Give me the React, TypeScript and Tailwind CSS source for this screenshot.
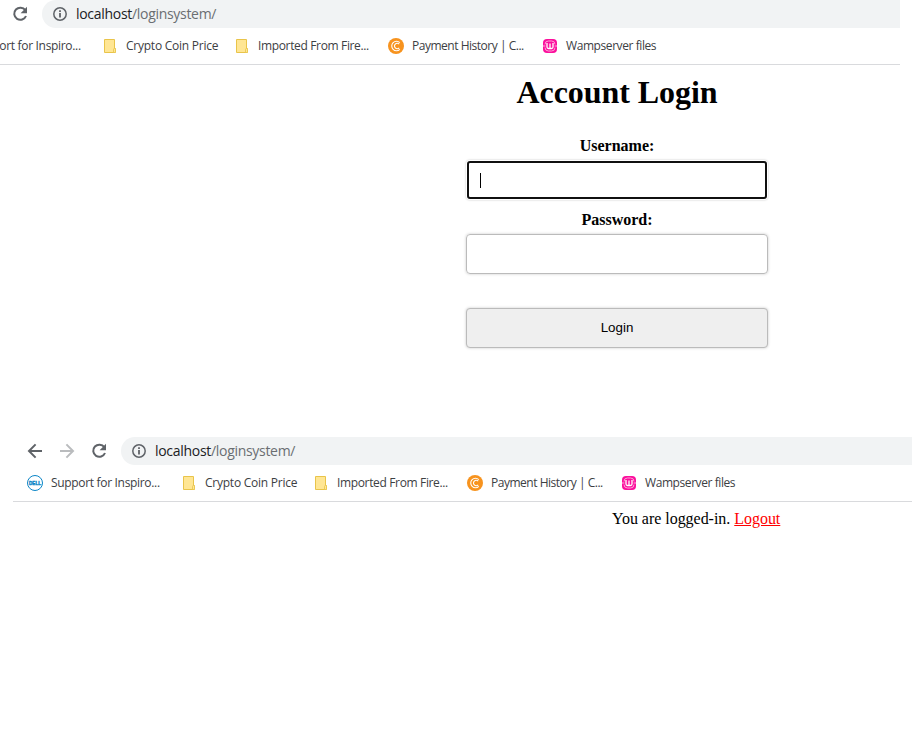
import React from "react";

const ICON = "#5f6368";

function BackIcon({ flip, color }: { flip?: boolean; color: string }) {
  return (
    <svg width="20" height="20" viewBox="0 0 20 20" fill="none" stroke={color} strokeWidth="2" className={flip ? "rotate-180" : ""}>
      <path d="M17 10H4.4M10.6 3.4L4 10l6.6 6.6" />
    </svg>
  );
}

function ReloadIcon() {
  return (
    <svg width="20" height="20" viewBox="0 0 20 20" fill="none">
      <path d="M15.3 6.2A6.1 6.1 0 1 0 16 12" stroke={ICON} strokeWidth="2" />
      <path d="M17 2.8V9.2H10.6z" fill={ICON} />
    </svg>
  );
}

function InfoIcon() {
  return (
    <svg width="14" height="14" viewBox="0 0 14 14" fill="none">
      <circle cx="7" cy="7" r="6.2" stroke={ICON} strokeWidth="1.5" />
      <path d="M6.1 6h1.8v4.5H6.1zM6.1 3.3h1.8V5H6.1z" fill={ICON} />
    </svg>
  );
}

function DellIcon() {
  return (
    <svg width="16" height="16" viewBox="0 0 16 16" fill="none">
      <circle cx="8" cy="8" r="7.5" stroke="#0a85c7" strokeWidth="1" />
      <text x="8" y="9.6" textAnchor="middle" textLength="12" lengthAdjust="spacingAndGlyphs" fontFamily="Liberation Sans" fontWeight="700" fontSize="4.6" fill="#0a85c7" stroke="#0a85c7" strokeWidth=".4">DELL</text>
    </svg>
  );
}

function FolderIcon() {
  return (
    <svg width="14" height="16" viewBox="0 0 14 16">
      <path d="M.5 1.5h10v9h1v4H.5z" fill="#ffe694" stroke="#e9c44a" />
      <path d="M9.5 14.5v-3q0-1 1-1t1 1v2q0 1-1 1z" fill="#ffe694" stroke="#e9c44a" strokeWidth=".8" />
    </svg>
  );
}

function CoinIcon() {
  return (
    <svg width="16" height="16" viewBox="0 0 16 16" fill="none">
      <circle cx="8" cy="8" r="8" fill="#f7931e" />
      <path d="M11.8 4.7A4.7 4.7 0 1 0 11.8 11.3" stroke="#fff" strokeWidth="1.1" />
      <path d="M11.2 6.2A2.7 2.7 0 1 0 11.2 9.8" stroke="#fff" strokeWidth="1.1" />
    </svg>
  );
}

function WampIcon() {
  return (
    <svg width="14" height="14" viewBox="0 0 14 14" fill="none">
      <rect width="14" height="14" rx="4" fill="#fb0f9c" />
      <path d="M2 5.4Q2 2 5.4 2h3.2Q12 2 12 5.4M2 8.6Q2 12 5.4 12h3.2Q12 12 12 8.6" stroke="#ff9fd6" strokeWidth="1" />
      <path d="M0 7h2.4M11.6 7H14" stroke="#ffb5df" strokeWidth="1" />
      <path d="M4 4v4q0 1.5 1.5 1.5H7V4.4M7 9.5h1.5Q10 9.5 10 8V4" stroke="#fff" strokeWidth="1.3" />
    </svg>
  );
}

function BrowserBar() {
  return (
    <div className="h-[65px] border-b border-[#d9dadd] font-['Open_Sans',sans-serif]">
      <div className="flex h-7 items-center">
        <div className="flex w-[108px] shrink-0 gap-3 pl-3">
          <BackIcon color={ICON} />
          <BackIcon color="#babcbe" flip />
          <ReloadIcon />
        </div>
        <div className="flex h-7 flex-1 items-center rounded-l-full bg-[#f1f3f4] pl-[11px]">
          <InfoIcon />
          <span className="ml-[9px] text-[14px] leading-7 tracking-[-0.3px] whitespace-nowrap text-[#6a6e72]">
            <span className="text-[#202124]">localhost</span>/loginsystem/
          </span>
        </div>
      </div>
      <div className="flex h-9 items-center pl-3.5 text-[12px] whitespace-nowrap text-[#3c4043]">
        <div className="flex w-[156px] shrink-0 items-center gap-2">
          <DellIcon />
          <span className="tracking-[-0.32px]">Support for Inspiro...</span>
        </div>
        <div className="flex w-[132px] shrink-0 items-center gap-2">
          <FolderIcon />
          <span className="tracking-[-0.24px]">Crypto Coin Price</span>
        </div>
        <div className="flex w-[152px] shrink-0 items-center gap-2">
          <FolderIcon />
          <span className="tracking-[-0.35px]">Imported From Fire...</span>
        </div>
        <div className="flex w-[155px] shrink-0 items-center gap-2">
          <CoinIcon />
          <span className="tracking-[-0.48px]">Payment History | C...</span>
        </div>
        <div className="flex items-center gap-[9px]">
          <WampIcon />
          <span className="tracking-[-0.42px]">Wampserver files</span>
        </div>
      </div>
    </div>
  );
}

export default function App() {
  return (
    <div className="h-[729px] w-[915px] overflow-hidden bg-white font-['Liberation_Serif',serif] text-black">
      <section className="h-[437px]">
        <div className="w-[900px] overflow-hidden">
          <div className="-ml-[66px]">
            <BrowserBar />
          </div>
        </div>
        <form className="ml-[466px] flex w-[302px] flex-col text-center" onSubmit={(e) => e.preventDefault()}>
          <h1 className="mt-[9px] h-9 text-[32px] leading-9 font-bold tracking-[-0.05px]">Account Login</h1>
          <label className="mt-[27px] h-[18px] text-[16px] leading-[18px] font-bold">Username:</label>
          <div className="mt-[5px] h-10 rounded p-px shadow-[0_0_2px_rgba(0,0,0,0.25)]">
            <div className="flex h-[38px] items-center rounded-[3px] border-2 border-[#101010] bg-white pl-[11px]">
              <span className="h-[15px] w-px bg-black" />
            </div>
          </div>
          <label className="mt-[11px] h-[18px] text-[16px] leading-[18px] font-bold">Password:</label>
          <input type="password" className="mt-[5px] h-10 rounded-[4px] border border-[#bbb] px-3 shadow-[0_0_3px_rgba(0,0,0,0.22)]" />
          <button className="mt-[34px] h-10 rounded-[4px] border border-[#bbb] bg-[#efefef] font-['Liberation_Sans',sans-serif] text-[13.333px] shadow-[0_0_3px_rgba(0,0,0,0.22)]">
            Login
          </button>
        </form>
      </section>
      <section className="ml-[13px] w-[899px]">
        <BrowserBar />
        <p className="mt-2 ml-[599px] text-[16px] leading-[18px] tracking-[-0.03px] whitespace-nowrap">
          You are logged-in. <a className="text-[#f00] underline">Logout</a>
        </p>
      </section>
    </div>
  );
}
